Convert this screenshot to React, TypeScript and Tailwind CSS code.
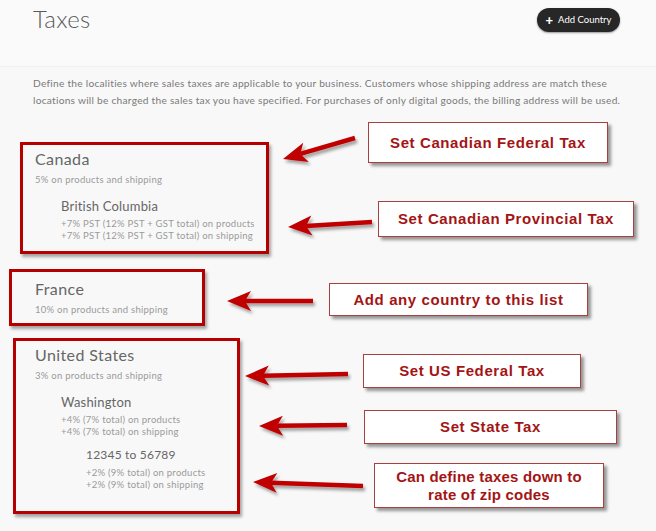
import React from "react";

type Arrow = { x1: number; y1: number; x2: number; y2: number };

// tail (x1,y1) -> tip (x2,y2)
const arrows: Arrow[] = [
  { x1: 355, y1: 138, x2: 283, y2: 159 },
  { x1: 372, y1: 222, x2: 288, y2: 227 },
  { x1: 313, y1: 301, x2: 227, y2: 301 },
  { x1: 348, y1: 374, x2: 245, y2: 376 },
  { x1: 347, y1: 425, x2: 259, y2: 426 },
  { x1: 363, y1: 486, x2: 253, y2: 482 },
];

function head(a: Arrow) {
  const dx = a.x2 - a.x1;
  const dy = a.y2 - a.y1;
  const len = Math.hypot(dx, dy);
  const ux = dx / len;
  const uy = dy / len;
  const hl = 24;
  const hw = 10;
  const bx = a.x2 - ux * hl;
  const by = a.y2 - uy * hl;
  const nx = bx + ux * 6;
  const ny = by + uy * 6;
  return {
    points: `${a.x2},${a.y2} ${bx - uy * hw},${by + ux * hw} ${nx},${ny} ${bx + uy * hw},${by - ux * hw}`,
    sx: nx,
    sy: ny,
  };
}

function Arrows() {
  return (
    <svg className="absolute inset-0 pointer-events-none" width="656" height="531">
      <defs>
        <filter id="sh" x="-20%" y="-50%" width="140%" height="200%">
          <feDropShadow dx="2" dy="3" stdDeviation="1.5" floodColor="#000" floodOpacity="0.35" />
        </filter>
      </defs>
      {arrows.map((a, i) => {
        const h = head(a);
        return (
          <g key={i} filter="url(#sh)">
            <line x1={a.x1} y1={a.y1} x2={h.sx} y2={h.sy} stroke="#c00000" strokeWidth="4.5" />
            <polygon points={h.points} fill="#c00000" />
          </g>
        );
      })}
    </svg>
  );
}

function Callout({ className, children }: { className: string; children: React.ReactNode }) {
  return (
    <div
      className={`absolute flex items-center justify-center bg-white border border-[#a84040] shadow-[3px_3px_3px_rgba(0,0,0,0.4)] text-center font-bold text-[15px] leading-[18px] text-[#a31515] tracking-[0.6px] ${className}`}
      style={{ fontFamily: '"Liberation Sans", Arial, sans-serif' }}
    >
      {children}
    </div>
  );
}

function RedBox({ className }: { className: string }) {
  return (
    <div
      className={`absolute border-[3px] border-[#b50000] shadow-[2px_3px_3px_rgba(0,0,0,0.35)] ${className}`}
    />
  );
}

function Line({ children, className = "" }: { children: React.ReactNode; className?: string }) {
  return <div className={`text-[9.5px] leading-[12px] tracking-[0.25px] text-[#9a9a9a] ${className}`}>{children}</div>;
}

export default function App() {
  return (
    <div
      className="relative w-[656px] h-[531px] overflow-hidden bg-[#f8f8f8]"
      style={{ fontFamily: "Lato, 'Open Sans', sans-serif" }}
    >
      {/* Header */}
      <div className="flex items-start justify-between h-[67px] pl-[33px] pr-[36px] pt-[4px] bg-[#fafafa] border-b border-[#f0f0f0]">
        <h1 className="text-[24px] leading-[30px] font-light text-[#5a5a5a] tracking-[0.3px]">Taxes</h1>
        <button className="mt-[4px] flex items-center gap-[5px] h-[24px] w-[83px] justify-center rounded-full bg-[#272727] text-white text-[9.5px] shadow-[0_1px_2px_rgba(0,0,0,0.4)]">
          <span className="text-[13px] font-black leading-none">+</span>
          <span>Add Country</span>
        </button>
      </div>

      {/* Description */}
      <p className="pl-[33px] pt-[8px] whitespace-nowrap text-[10.2px] leading-[17px] tracking-[0.25px] text-[#7a7a7a]">
        Define the localities where sales taxes are applicable to your business. Customers whose shipping address are match these
        <br />
        locations will be charged the sales tax you have specified. For purchases of only digital goods, the billing address will be used.
      </p>

      {/* Countries */}
      <div className="flex flex-col pl-[35px] pt-[40px]">
        <div className="text-[16px] leading-[20px] tracking-[0.4px] text-[#666]">Canada</div>
        <Line className="mt-[5px]">5% on products and shipping</Line>
        <div className="pl-[26px] mt-[11px] flex flex-col">
          <div className="text-[13px] leading-[18px] tracking-[0.2px] text-[#666]">British Columbia</div>
          <Line className="mt-[3px]">+7% PST (12% PST + GST total) on products</Line>
          <Line>+7% PST (12% PST + GST total) on shipping</Line>
        </div>

        <div className="mt-[37px] text-[16px] leading-[20px] tracking-[0.4px] text-[#666]">France</div>
        <Line className="mt-[5px]">10% on products and shipping</Line>

        <div className="mt-[29px] text-[16px] leading-[20px] tracking-[0.4px] text-[#666]">United States</div>
        <Line className="mt-[5px]">3% on products and shipping</Line>
        <div className="pl-[26px] mt-[11px] flex flex-col">
          <div className="text-[13px] leading-[18px] tracking-[0.2px] text-[#666]">Washington</div>
          <Line className="mt-[3px]">+4% (7% total) on products</Line>
          <Line>+4% (7% total) on shipping</Line>
          <div className="pl-[25px] mt-[10px] flex flex-col">
            <div className="text-[12px] leading-[14px] tracking-[0.2px] text-[#666]">12345 to 56789</div>
            <Line className="mt-[5px] leading-[11.5px]">+2% (9% total) on products</Line>
            <Line className="leading-[11.5px]">+2% (9% total) on shipping</Line>
          </div>
        </div>
      </div>

      {/* Annotation overlay */}
      <RedBox className="left-[20px] top-[142px] w-[249px] h-[112px]" />
      <RedBox className="left-[9px] top-[269px] w-[196px] h-[57px]" />
      <RedBox className="left-[13px] top-[338px] w-[227px] h-[176px]" />

      <Arrows />

      <Callout className="left-[368px] top-[122px] w-[240px] h-[41px]">Set Canadian Federal Tax</Callout>
      <Callout className="left-[378px] top-[201px] w-[256px] h-[36px]">Set Canadian Provincial Tax</Callout>
      <Callout className="left-[329px] top-[283px] w-[259px] h-[33px]">Add any country to this list</Callout>
      <Callout className="left-[363px] top-[354px] w-[218px] h-[34px]">Set US Federal Tax</Callout>
      <Callout className="left-[364px] top-[410px] w-[253px] h-[34px]">Set State Tax</Callout>
      <Callout className="left-[374px] top-[463px] w-[230px] h-[45px]">
        <span className="tracking-[0.2px]">
          Can define taxes down to
          <br />
          rate of zip codes
        </span>
      </Callout>
    </div>
  );
}
